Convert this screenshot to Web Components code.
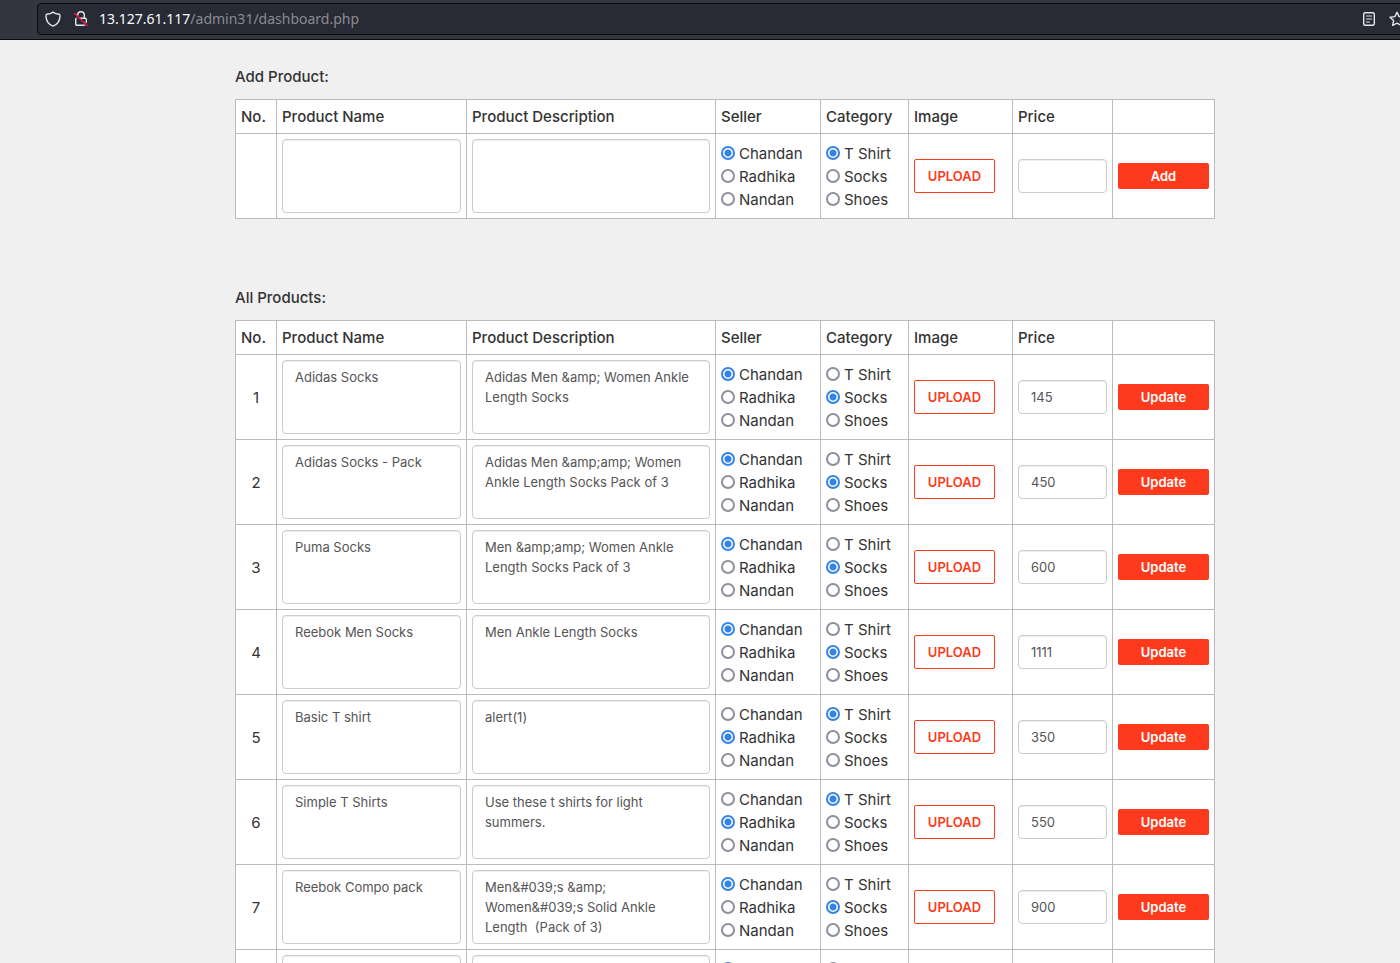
<!DOCTYPE html>
<html lang="en">
<head>
<meta charset="utf-8">
<title>Dashboard</title>
<style>
  body { margin: 0; font: 15px/23px Inter, "Liberation Sans", sans-serif; color: #333; background: #f0f0f0; }
</style>
</head>
<body>
<dashboard-page></dashboard-page>

<script>
const esc = s => String(s).replace(/&/g, '&amp;').replace(/</g, '&lt;').replace(/"/g, '&quot;');

const define = (name, render) => customElements.define(name, class extends HTMLElement {
  connectedCallback() {
    if (this.shadowRoot) return;
    const t = document.createElement('template');
    t.innerHTML = render(this);
    this.attachShadow({ mode: 'open' }).append(t.content.cloneNode(true));
  }
});

/* Browser address bar */
define('address-bar', el => `
<style>
  :host { display: block; height: 39px; background: #33363e; border-bottom: 1px solid #0c0c0d; overflow: hidden; font: 14px/20px "Noto Sans", "Liberation Sans", sans-serif; }
  .field { box-sizing: border-box; display: flex; align-items: center; height: 32px; margin: 3px -12px 0 37px; padding: 0 6px 0 7px; border: 1px solid #0c0c0d; border-radius: 4px; background: #282a35; color: #8b8b92; }
  b { font-weight: 400; color: #fbfbfe; }
  .url { flex: 1; margin-left: 10px; }
  svg { display: block; width: 16px; height: 16px; flex: none; fill: none; stroke: #e6e6ea; stroke-width: 1.4; stroke-linejoin: round; stroke-linecap: round; }
  .lock, .star { margin-left: 12px; }
</style>
<div class="field">
  <svg viewBox="0 0 16 16" aria-hidden="true"><path d="M8 1.1C6.600 2.300 4.300 3.100 1.700 3.300 1 3.400 1 4.300 1 5.200c.2 4.300 2.400 8.200 7 9.900 4.600-1.700 6.800-5.600 7-9.900 0-.9 0-1.800-.7-1.900C11.700 3.100 9.400 2.300 8 1.100z"/></svg>
  <svg class="lock" viewBox="0 0 16 16" aria-hidden="true"><path d="M4.700 4.200V4a3.300 3.300 0 0 1 6.600 0v3.200M6.500 7.200h5.800q1 0 1 1v3M11.300 14.300H3.700q-1 0-1-1V8.200q0-.6.500-.9"/><path d="M1.500 2.200l12.500 12.300" stroke="#f01848"/></svg>
  <span class="url"><b>${el.getAttribute('host')}</b>${el.getAttribute('path')}</span>
  <svg viewBox="0 0 16 16" aria-hidden="true"><rect x="2.700" y="1.700" width="10.600" height="12.600" rx="1.500"/><path d="M5.500 5h5M5.500 8h5M5.500 11h3" stroke-width="1.200"/></svg>
  <svg class="star" viewBox="0 0 16 16" aria-hidden="true"><path d="M8 1.200l2.100 4.400 4.900.6-3.600 3.400.9 4.900L8 12.100l-4.300 2.400.9-4.900L1 6.200l4.900-.6z"/></svg>
</div>`);

/* One set of radio buttons */
define('radio-set', el => `
<style>
  :host { display: block; }
  fieldset { margin: 0; padding: 0; border: 0; min-width: 0; }
  label { display: flex; align-items: center; gap: 4px; height: 23px; }
  input { appearance: none; box-sizing: border-box; flex: none; width: 14px; height: 14px; margin: 0; border: 2px solid #8f8f9d; border-radius: 50%; background: #fff; }
  input:checked { border-color: #3584e4; background: radial-gradient(circle, #3584e4 3px, #fff 4px); }
</style>
<fieldset aria-label="${el.getAttribute('label')}">
  ${el.getAttribute('options').split(',').map((o, i) => `<label><input type="radio" name="choice" value="${i}"${el.getAttribute('value') === o ? ' checked' : ''}>${o}</label>`).join('')}
</fieldset>`);

define('text-box', el => `
<style>
  :host { display: block; }
  input, textarea { box-sizing: border-box; display: block; width: 100%; height: 34px; margin: 0; padding: 6px 12px; border: 1px solid #ccc; border-radius: 4px; background: #fff; box-shadow: inset 0 1px 1px rgba(0, 0, 0, .075); font: 13px/20px Inter, "Liberation Sans", sans-serif; color: #555; }
  textarea { height: 74px; resize: none; overflow: hidden; }
</style>
${el.hasAttribute('multiline')
  ? `<textarea aria-label="${el.getAttribute('label')}">${esc(el.getAttribute('value'))}</textarea>`
  : `<input type="text" aria-label="${el.getAttribute('label')}" value="${esc(el.getAttribute('value'))}">`}`);

define('push-button', () => `
<style>
  :host { display: block; }
  button { box-sizing: border-box; display: block; width: 100%; height: 26px; margin: 0; padding: 0; border: 0; border-radius: 2px; background: #fd3a1b; color: #fff; font: 600 13px/20px Inter, "Liberation Sans", sans-serif; }
  :host([outline]) button { width: 81px; height: 34px; border: 1px solid #fd3a1b; background: #fff; color: #fd3a1b; }
</style>
<button type="button"><slot></slot></button>`);

/* Titled table with one editable product per row */
customElements.define('product-table', class extends HTMLElement {
  constructor() {
    super();
    this.attachShadow({ mode: 'open' });
  }
  set rows(rows) {
    const widths = [41, 190, 249, 105, 88, 104, 100, 102];
    const heads = ['No.', 'Product Name', 'Product Description', 'Seller', 'Category', 'Image', 'Price', ''];
    this.shadowRoot.innerHTML = `
<style>
  :host { display: block; }
  h2 { margin: 0 0 11px; font-size: 15px; line-height: 23px; font-weight: 500; }
  table { width: 100%; table-layout: fixed; border-collapse: collapse; background: #fff; }
  th, td { padding: 5px; border: 1px solid #bbb; vertical-align: middle; text-align: left; }
  th { font-weight: 500; }
  td:first-child { text-align: center; }
</style>
<h2><slot></slot></h2>
<table>
  <colgroup>${widths.map(w => `<col style="width:${w}px">`).join('')}</colgroup>
  <thead><tr>${heads.map(h => h ? `<th scope="col">${h}</th>` : '<td></td>').join('')}</tr></thead>
  <tbody>${rows.map(([no, name, text, seller, category, price]) => `<tr>
    <td>${no}</td>
    <td><text-box multiline label="Product Name" value="${esc(name)}"></text-box></td>
    <td><text-box multiline label="Product Description" value="${esc(text)}"></text-box></td>
    <td><radio-set label="Seller" options="Chandan,Radhika,Nandan" value="${seller}"></radio-set></td>
    <td><radio-set label="Category" options="T Shirt,Socks,Shoes" value="${category}"></radio-set></td>
    <td><push-button outline>UPLOAD</push-button></td>
    <td><text-box label="Price" value="${price}"></text-box></td>
    <td><push-button>${this.getAttribute('action')}</push-button></td>
  </tr>`).join('')}</tbody>
</table>`;
  }
});

customElements.define('dashboard-page', class extends HTMLElement {
  connectedCallback() {
    const root = this.attachShadow({ mode: 'open' });
    root.innerHTML = `
<style>
  :host { display: block; }
  main { padding: 25px 0 0 50px; }
  .content { display: flex; flex-direction: column; gap: 67px; max-width: 980px; margin: 0 auto; }
</style>
<address-bar host="13.127.61.117" path="/admin31/dashboard.php"></address-bar>
<main><div class="content">
  <product-table id="add" action="Add">Add Product:</product-table>
  <product-table id="all" action="Update">All Products:</product-table>
</div></main>`;
    root.getElementById('add').rows = [['', '', '', 'Chandan', 'T Shirt', '']];
    root.getElementById('all').rows = [
      [1, 'Adidas Socks', 'Adidas Men &amp; Women Ankle Length Socks', 'Chandan', 'Socks', 145],
      [2, 'Adidas Socks - Pack', 'Adidas Men &amp;amp; Women Ankle Length Socks Pack of 3', 'Chandan', 'Socks', 450],
      [3, 'Puma Socks', 'Men &amp;amp; Women Ankle Length Socks Pack of 3', 'Chandan', 'Socks', 600],
      [4, 'Reebok Men Socks', 'Men Ankle Length Socks', 'Chandan', 'Socks', 1111],
      [5, 'Basic T shirt', 'alert(1)', 'Radhika', 'T Shirt', 350],
      [6, 'Simple T Shirts', 'Use these t shirts for light summers.', 'Radhika', 'T Shirt', 550],
      [7, 'Reebok Compo pack', 'Men&#039;s &amp; Women&#039;s Solid Ankle Length  (Pack of 3)', 'Chandan', 'Socks', 900],
      [8, '', '', 'Chandan', 'Socks', '']
    ];
  }
});
</script>
</body>
</html>
